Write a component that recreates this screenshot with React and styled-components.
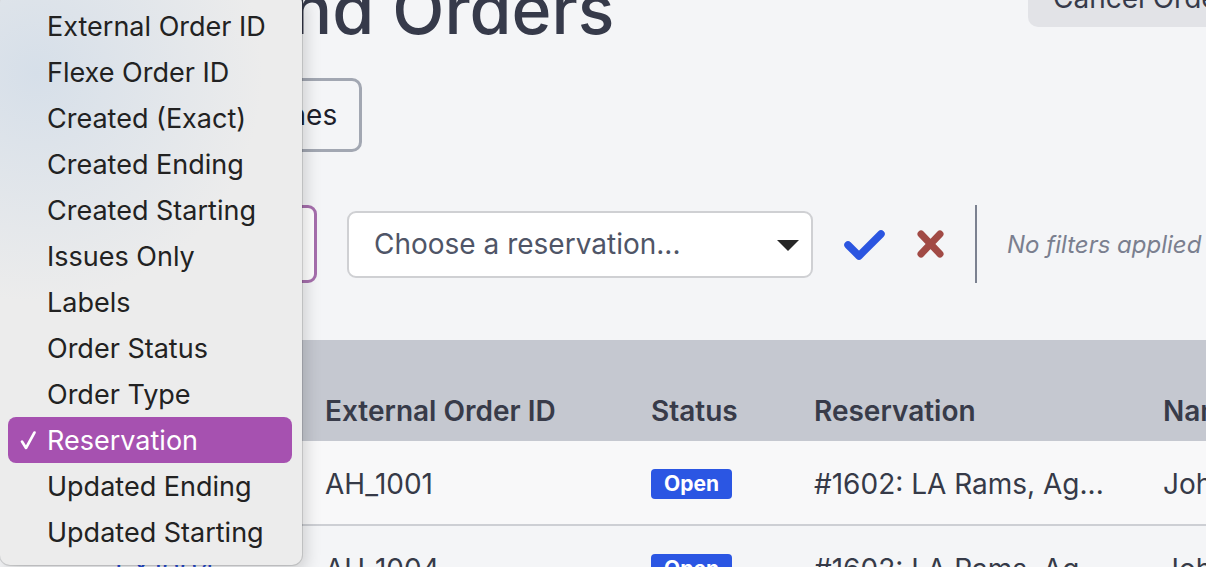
import React from 'react';
import styled, { createGlobalStyle } from 'styled-components';

const Global = createGlobalStyle`
  html, body { margin: 0; padding: 0; background: #f4f5f7; }
  body { font-family: Inter, "Liberation Sans", sans-serif; }
  * { box-sizing: border-box; }
`;

const Page = styled.div`
  position: relative;
  width: 1206px;
  height: 567px;
  overflow: hidden;
  background: #f4f5f7;
  color: #363a48;
`;

const Main = styled.div`
  display: flex;
  flex-direction: column;
  width: 1500px;
`;

const HeaderRow = styled.div`
  display: grid;
  grid-template-columns: 1028px auto;
  align-items: start;
  margin-top: -31px;
  height: 74px;
`;

const Title = styled.h1`
  margin: 6px 0 0;
  padding-left: 51px;
  font-size: 68px;
  line-height: 68px;
  font-weight: 500;
  color: #363a4a;
  white-space: nowrap;
`;

const GreyButton = styled.button`
  font-family: inherit;
  font-size: 28px;
  line-height: 36px;
  padding: 11px 25px;
  border: none;
  border-radius: 10px;
  background: #e2e3e7;
  color: #363a4a;
  white-space: nowrap;
  text-align: left;
`;

const ActionsRow = styled.div`
  display: flex;
  gap: 20px;
  margin-top: 35px;
  padding-left: 81px;
`;

const OutlineButton = styled.button`
  font-family: inherit;
  font-size: 28px;
  line-height: 36px;
  padding: 16px 22px 16px 24px;
  border: 3px solid #a2a7b2;
  border-radius: 10px;
  background: #f4f5f7;
  color: #1d1f2b;
  white-space: nowrap;
`;

const FilterRow = styled.div`
  display: flex;
  align-items: center;
  gap: 30px;
  margin-top: 53px;
  padding-left: 72px;
  height: 78px;
`;

const Select = styled.div`
  display: flex;
  align-items: center;
  justify-content: space-between;
  width: ${p => p.$w}px;
  height: ${p => (p.$focused ? 78 : 67)}px;
  padding: 0 12px 0 ${p => (p.$focused ? 24 : 25)}px;
  border: ${p => (p.$focused ? '3px solid #a66fad' : '2px solid #cfd0d3')};
  border-radius: 9px;
  background: #fff;
  font-size: 28px;
  color: #4f5567;
  white-space: nowrap;
`;

const Caret = styled.span`
  width: 0;
  height: 0;
  border-left: 11px solid transparent;
  border-right: 11px solid transparent;
  border-top: 11px solid #262626;
  margin-top: 2px;
`;

const IconButton = styled.button`
  display: flex;
  align-items: center;
  justify-content: center;
  padding: 0;
  border: none;
  background: none;
`;

const Divider = styled.div`
  width: 2px;
  align-self: stretch;
  background: #7b8190;
`;

const FilterNote = styled.span`
  font-size: 24px;
  font-style: italic;
  color: #7a7f8f;
  white-space: nowrap;
`;

const Table = styled.div`
  margin-top: 57px;
  margin-left: 72px;
  display: grid;
  grid-template-columns: 229px 326px 163px 349px 400px;
`;

const HeadCell = styled.div`
  height: 101px;
  display: flex;
  align-items: flex-end;
  padding: 0 0 14px ${p => (p.$first ? 43 : 24)}px;
  background: #c5c8d0;
  font-size: 28px;
  line-height: 32px;
  font-weight: 600;
  color: #383b49;
  white-space: nowrap;
`;

const Cell = styled.div`
  height: 85px;
  display: flex;
  align-items: center;
  padding: 2px 0 0 ${p => (p.$first ? 43 : 24)}px;
  background: ${p => (p.$alt ? '#f4f5f7' : '#f8f8f9')};
  border-bottom: 2px solid #cdcfd4;
  font-size: 28px;
  color: #363a48;
  white-space: nowrap;
`;

const OrderLink = styled.a`
  color: #2a50d8;
  text-decoration: underline;
`;

const Badge = styled.span`
  display: inline-flex;
  align-items: center;
  height: 30px;
  padding: 0 13px;
  border-radius: 4px;
  background: #2b56e3;
  color: #fff;
  font-size: 21px;
  font-weight: 700;
`;

const Menu = styled.div`
  position: absolute;
  left: 0;
  top: -7px;
  width: 302px;
  padding: 10px 10px 10px 8px;
  border-radius: 10px;
  background:
    radial-gradient(ellipse 75% 40% at 12% 14%, rgba(214, 223, 233, 1) 0%, rgba(236, 236, 236, 0) 100%),
    #ececec;
  box-shadow: 0 0 0 1px rgba(0, 0, 0, 0.12), 4px 6px 16px rgba(0, 0, 0, 0.16);
  z-index: 5;
`;

const MenuItem = styled.div`
  display: flex;
  align-items: center;
  height: 46px;
  padding-left: 12px;
  border-radius: 8px;
  font-size: 27px;
  color: ${p => (p.$selected ? '#fff' : '#222')};
  background: ${p => (p.$selected ? '#a651b0' : 'transparent')};
  white-space: nowrap;
`;

const CheckSlot = styled.span`
  width: 27px;
  display: flex;
  align-items: center;
`;

const menuItems = [
  'External Order ID',
  'Flexe Order ID',
  'Created (Exact)',
  'Created Ending',
  'Created Starting',
  'Issues Only',
  'Labels',
  'Order Status',
  'Order Type',
  'Reservation',
  'Updated Ending',
  'Updated Starting',
];

const rows = [
  { link: 'FX1001', ext: 'AH_1001', res: '#1602: LA Rams, Ag...', name: 'John Smith' },
  { link: 'FX1004', ext: 'AH_1004', res: '#1602: LA Rams, Ag...', name: 'John Smith' },
];

export default function App() {
  return (
    <Page>
      <Global />
      <Main>
        <HeaderRow>
          <Title>Outbound Orders</Title>
          <GreyButton>Cancel Orders</GreyButton>
        </HeaderRow>
        <ActionsRow>
          <OutlineButton>Manage Routines</OutlineButton>
        </ActionsRow>
        <FilterRow>
          <Select $focused $w={245}>
            <span>Reservation</span>
            <Caret />
          </Select>
          <Select $w={466}>
            <span>Choose a reservation...</span>
            <Caret />
          </Select>
          <IconButton aria-label="Apply">
            <svg width="43" height="31" viewBox="0 0 43 31">
              <path d="M5 16 L16 27 L38 5" fill="none" stroke="#2b55e0" strokeWidth="7.5" strokeLinecap="round" strokeLinejoin="round" />
            </svg>
          </IconButton>
          <IconButton aria-label="Clear">
            <svg width="29" height="30" viewBox="0 0 29 30">
              <path d="M5 5 L24 25 M24 5 L5 25" fill="none" stroke="#a14a45" strokeWidth="7" strokeLinecap="round" />
            </svg>
          </IconButton>
          <Divider />
          <FilterNote>No filters applied</FilterNote>
        </FilterRow>
        <Table>
          <HeadCell $first>Order ID</HeadCell>
          <HeadCell>External Order ID</HeadCell>
          <HeadCell>Status</HeadCell>
          <HeadCell>Reservation</HeadCell>
          <HeadCell>Name</HeadCell>
          {rows.map((r, i) => (
            <React.Fragment key={r.ext}>
              <Cell $first $alt={i % 2 === 1}><OrderLink>{r.link}</OrderLink></Cell>
              <Cell $alt={i % 2 === 1}>{r.ext}</Cell>
              <Cell $alt={i % 2 === 1}><Badge>Open</Badge></Cell>
              <Cell $alt={i % 2 === 1}>{r.res}</Cell>
              <Cell $alt={i % 2 === 1}>{r.name}</Cell>
            </React.Fragment>
          ))}
        </Table>
      </Main>
      <Menu>
        {menuItems.map(item => (
          <MenuItem key={item} $selected={item === 'Reservation'}>
            <CheckSlot>
              {item === 'Reservation' && (
                <svg width="16" height="19" viewBox="0 0 16 19">
                  <path d="M2 10.5 L6 17 L14.5 1.5" fill="none" stroke="#fff" strokeWidth="2.6" strokeLinecap="round" strokeLinejoin="round" />
                </svg>
              )}
            </CheckSlot>
            {item}
          </MenuItem>
        ))}
      </Menu>
    </Page>
  );
}
